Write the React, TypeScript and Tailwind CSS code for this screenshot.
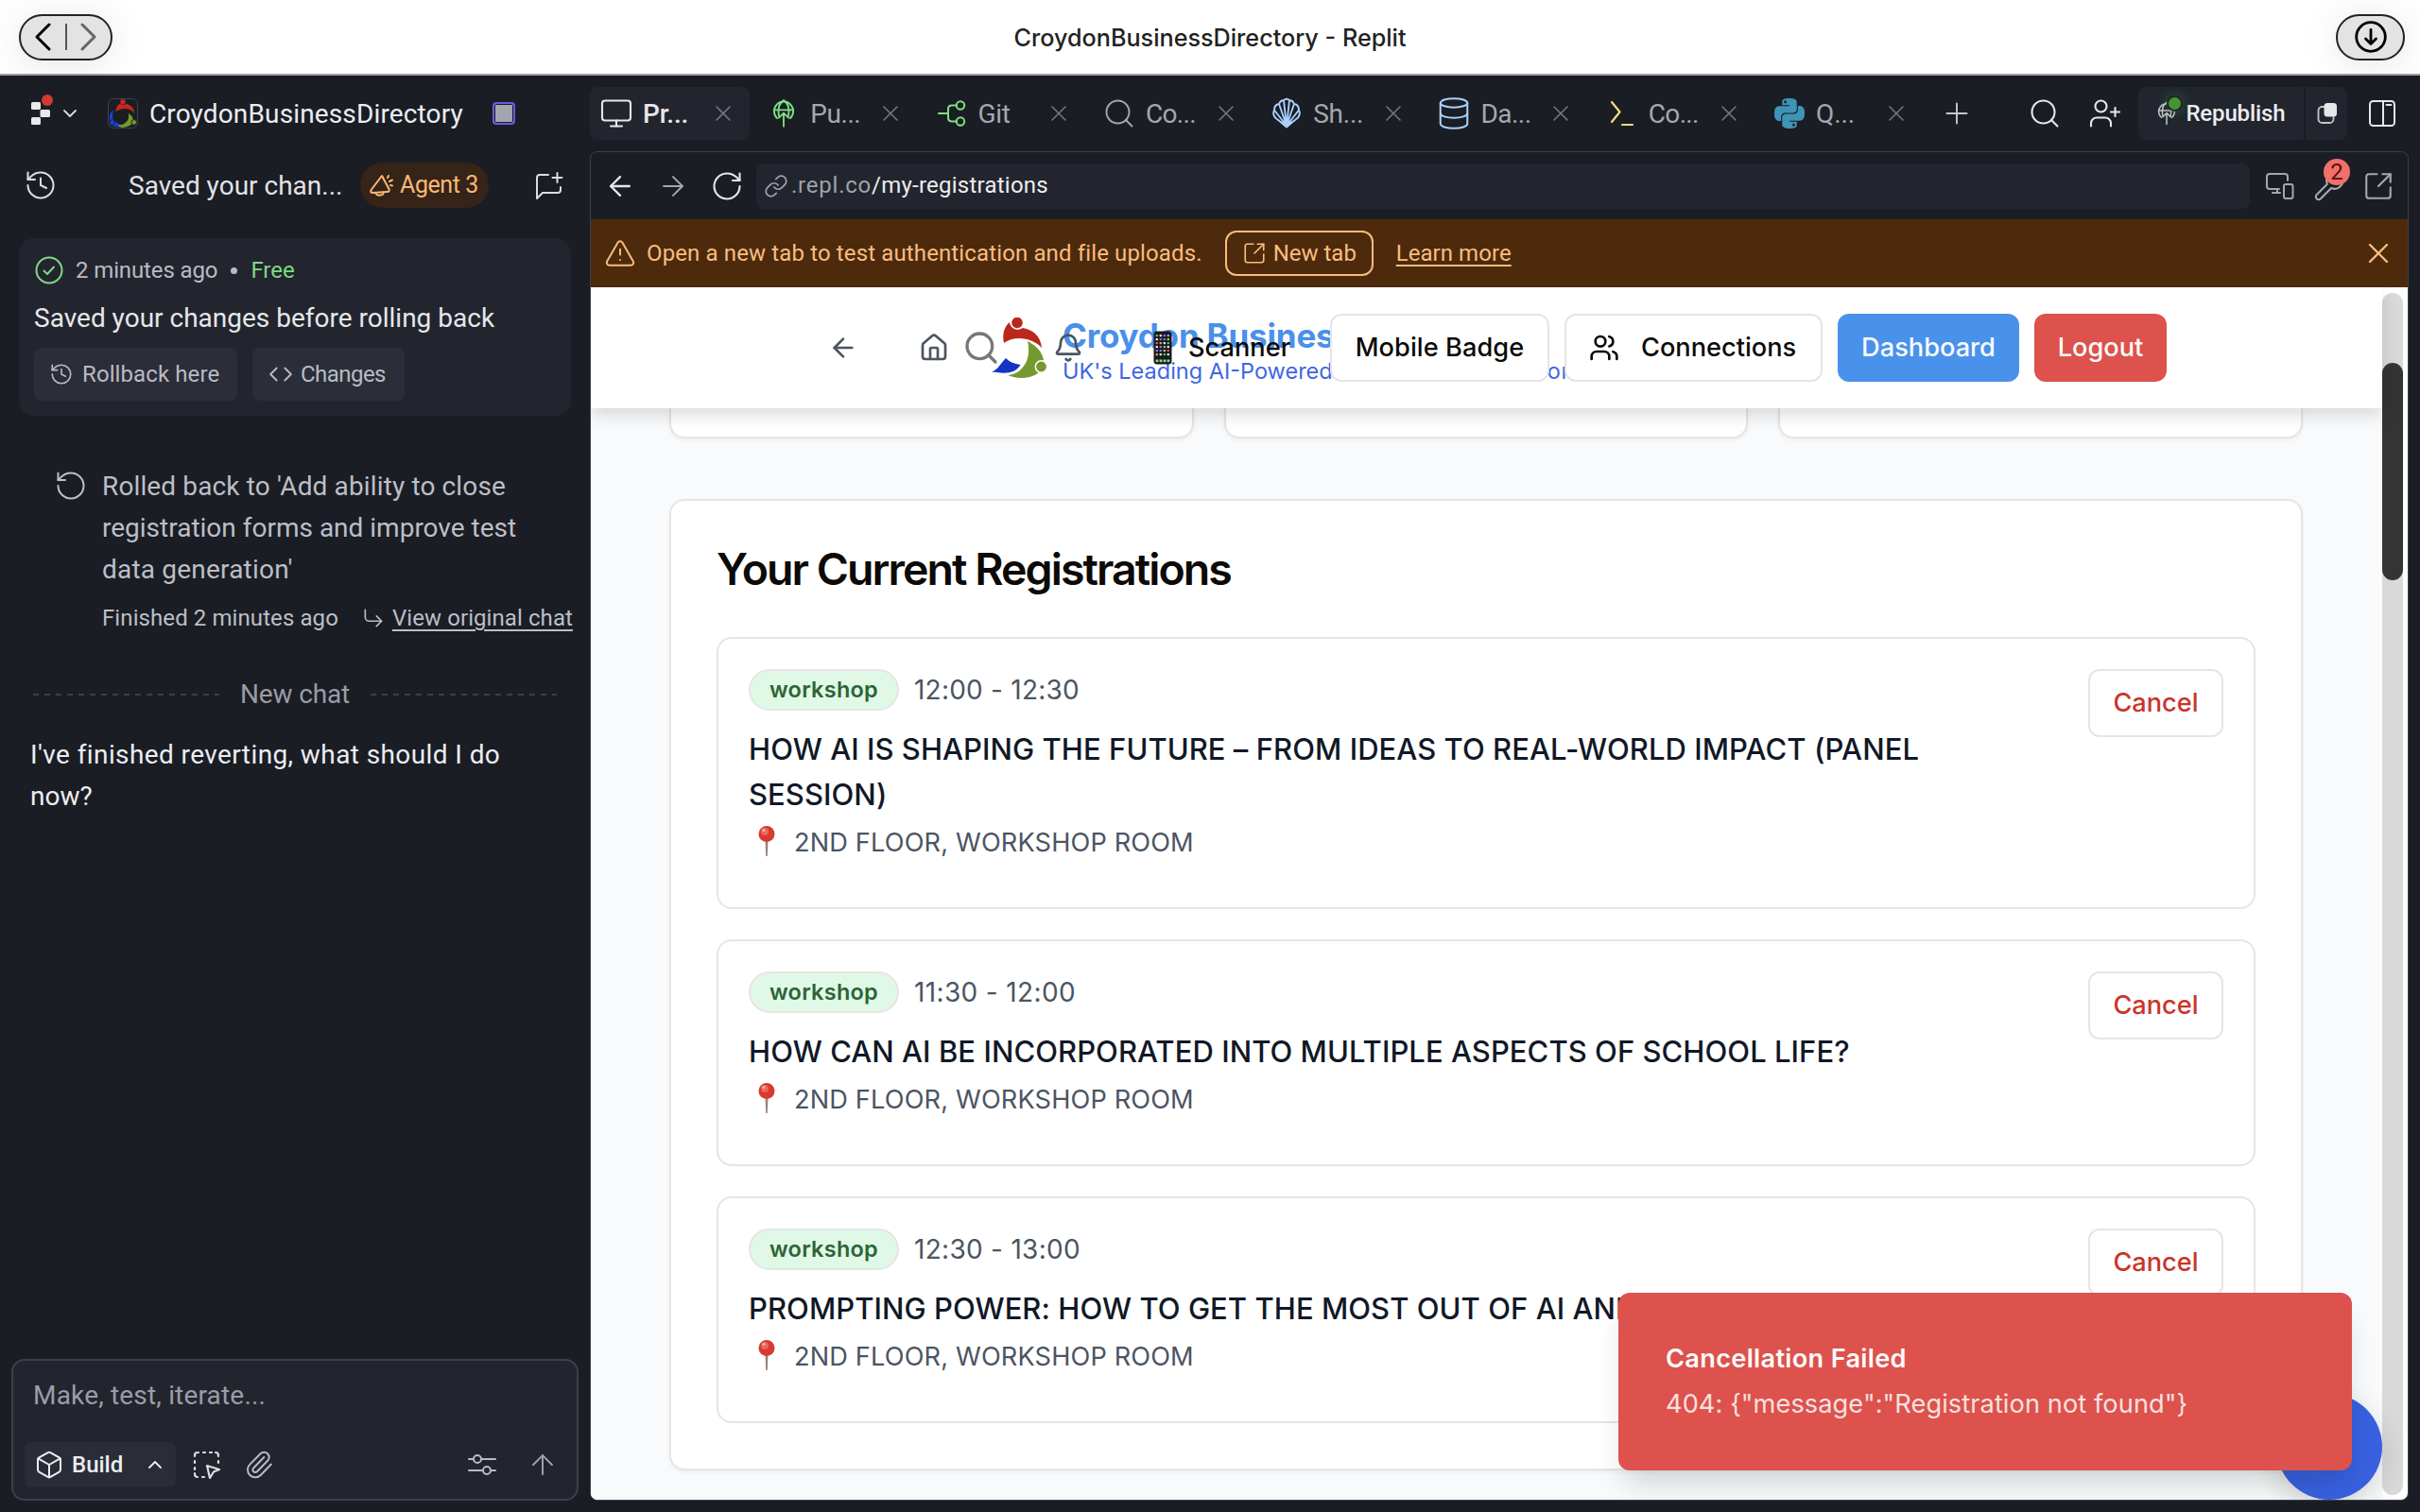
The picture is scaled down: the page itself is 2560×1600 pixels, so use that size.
import React from "react";
import {
  ArrowLeft, ArrowRight, ArrowUp, ChevronDown, ChevronUp, Search, X, Plus, House, Bell, Users,
  History, RotateCcw, RotateCw, SquareArrowOutUpRight, Paperclip, Monitor, Database,
  TriangleAlert, CornerDownRight, Wrench, UserPlus, Box, Code,
} from "lucide-react";
import { SiPython } from "react-icons/si";

function T({ className = "", children }: { className?: string; children: React.ReactNode }) {
  return <span className={"inline-block whitespace-nowrap " + className}>{children}</span>;
}

function Emblem({ className = "" }: { className?: string }) {
  return (
    <svg viewBox="0 0 60 64" className={className} fill="none">
      <path d="M14 27C12 18 14 10 20 5C21 12 28 15 34 11C45 13 53 20 54 32C45 22 26 18 14 27Z" fill="#bb271a" />
      <circle cx="28" cy="5.500" r="5.800" fill="#bb271a" />
      <path d="M39 25C51 31 58 41 56 52C50 64 32 67 18 61C32 60 44 46 39 25Z" fill="#76992f" />
      <circle cx="53.500" cy="52" r="6.200" fill="#76992f" stroke="#fff" strokeWidth="1.500" />
      <path d="M16 43C20 47 25 49 31.500 50C27 58 17 60 7 58L1 57.500C8 55 10 49 16 43Z" fill="#1434c4" />
    </svg>
  );
}

function EmblemFull({ className = "" }: { className?: string }) {
  return (
    <svg viewBox="0 0 32 32" className={className} fill="none">
      <circle cx="16" cy="3" r="3" fill="#c4281c" />
      <path d="M8 14C8 9 10 6 13 5C15 7 18 7 20 5C26 7 29 11 29 16C25 10 15 9 8 14Z" fill="#c4281c" />
      <path d="M6 12C2 19 5 28 18 29C14 31 8 32 1 29V18C2 15 3 14 6 12Z" fill="#1d3fd0" />
      <circle cx="4" cy="26" r="3" fill="#1d3fd0" stroke="#1a1d24" />
      <path d="M22 16C30 20 31 30 16 32C9 31 10 29 14 29C20 27 24 23 22 16Z" fill="#76992f" />
      <circle cx="28.500" cy="26" r="3" fill="#76992f" stroke="#1a1d24" />
    </svg>
  );
}

function GlobeUp({ className = "" }: { className?: string }) {
  return (
    <svg viewBox="0 0 26 34" className={className} fill="none" stroke="currentColor" strokeWidth="2" strokeLinecap="round" strokeLinejoin="round">
      <path d="M5.500 22.500A11 11 0 1 1 20.500 22.500" />
      <path d="M2 13H24M7.500 20C6 11 8 5 13 2C18 5 20 11 18.500 20" />
      <path d="M13 32V17M7.500 22L13 16.500L18.500 22" />
    </svg>
  );
}

function GitIcon({ className = "" }: { className?: string }) {
  return (
    <svg viewBox="0 0 30 28" className={className} fill="none" stroke="currentColor" strokeWidth="2" strokeLinecap="round">
      <circle cx="24" cy="5.500" r="4.200" />
      <circle cx="24" cy="22.500" r="4.200" />
      <path d="M1 14H11M20 5.500H15Q11 5.500 11 9.500V18.500Q11 22.500 15 22.500H20" />
    </svg>
  );
}

function ShellIcon({ className = "" }: { className?: string }) {
  return (
    <svg viewBox="0 0 30 34" className={className} fill="none" stroke="currentColor" strokeWidth="1.900" strokeLinejoin="round">
      <path d="M15 31L3.500 22C1 19.500 .8 16 2 13.500C2 10 4 7.500 7 7C8 4.500 10 3 12 3.300C13.500 1.300 16.500 1.300 18 3.300C20 3 22 4.500 23 7C26 7.500 28 10 28 13.500C29.200 16 29 19.500 26.500 22Z" />
      <path d="M15 30L2 13.500M15 30L7 7M15 30L12 3.300M15 30L18 3.300M15 30L23 7M15 30L28 13.500" />
      <path d="M15 31.500L9.500 26.500H20.500Z" fill="currentColor" />
    </svg>
  );
}

function PromptIcon({ className = "" }: { className?: string }) {
  return (
    <svg viewBox="0 0 26 28" className={className} fill="none" stroke="currentColor" strokeWidth="2.200" strokeLinecap="round" strokeLinejoin="round">
      <path d="M2 2L10.500 12.500L2 23M13 26H24" />
    </svg>
  );
}

function Devices({ className = "" }: { className?: string }) {
  return (
    <svg viewBox="0 0 30 28" className={className} fill="none" stroke="currentColor" strokeWidth="2" strokeLinecap="round">
      <path d="M14 17H4Q1 17 1 14V4Q1 1 4 1H20Q23 1 23 4V8M7 21H15M12 17V21" />
      <rect x="19" y="12" width="9.500" height="15" rx="2" />
    </svg>
  );
}

function Megaphone({ className = "" }: { className?: string }) {
  return (
    <svg viewBox="0 0 26 24" className={className} fill="none" stroke="currentColor" strokeWidth="2" strokeLinecap="round" strokeLinejoin="round">
      <path d="M13 2L20.500 16Q21.500 19 18.500 19L3 20Q0 19.500 2 16.500Z" />
      <path d="M6 20Q8 23.500 11 22.500Q15 22.500 14.500 19.500" />
      <path d="M19 4L20 2M21 8L24 6.500M22 12L24 12.500" />
    </svg>
  );
}

function NewChat({ className = "" }: { className?: string }) {
  return (
    <svg viewBox="0 0 30 30" className={className} fill="none" stroke="currentColor" strokeWidth="2" strokeLinecap="round" strokeLinejoin="round">
      <path d="M14 4H5Q2 4 2 7V29L8 23H24Q27 23 27 20V17M23.500 2V12M18.500 7H28.500" />
    </svg>
  );
}

function SelectCursor({ className = "" }: { className?: string }) {
  return (
    <svg viewBox="0 0 30 30" className={className} fill="none" stroke="currentColor" strokeWidth="2.200" strokeLinecap="round" strokeLinejoin="round">
      <path d="M2 6V5Q2 2 5 2H6M11 2H13M18 2H20M24 2Q27 2 27 5V6M27 11V13M2 11V13M2 18V20M2 24V25Q2 28 5 28M10 28H12" />
      <path d="M15 16L28 20L22 22.500L18 29Z" />
    </svg>
  );
}

function Sliders({ className = "" }: { className?: string }) {
  return (
    <svg viewBox="0 0 30 24" className={className} fill="none" stroke="currentColor" strokeWidth="2" strokeLinecap="round">
      <path d="M1 6H6M14 6H29M1 18H16M24 18H29" />
      <circle cx="10" cy="6" r="4" />
      <circle cx="20" cy="18" r="4" />
    </svg>
  );
}

function Pin() {
  return (
    <svg viewBox="0 0 20 34" className="mt-[-4px] h-[34px] w-[20px]">
      <path d="M8.500 16H11.500L10.800 33H9.200Z" fill="#9b8378" />
      <circle cx="10" cy="9.500" r="8.500" fill="#d63a30" />
      <circle cx="8" cy="7" r="4" fill="#e8695c" />
      <circle cx="7" cy="5.500" r="1.500" fill="#f6b3a8" />
    </svg>
  );
}

const APP_COLORS = ["#5ac463", "#eeeeee", "#c05ae0", "#5ac8f5", "#eeeeee", "#9a6cf0", "#4a90ea", "#e8b64c", "#e25b52", "#f2a33c", "#eeeeee"];

function Phone() {
  const dots = [];
  for (let r = 0; r < 6; r++)
    for (let c = 0; c < 4; c++)
      dots.push(<rect key={`${r}-${c}`} x={2.600 + c * 4} y={4 + r * 4} width="2.400" height="2.200" rx=".6" fill={APP_COLORS[(r * 4 + c) % 11]} />);
  return (
    <svg viewBox="0 0 20 36" className="h-[36px] w-[20px]">
      <rect x=".5" y=".5" width="19" height="35" rx="3.500" fill="#1a1a1c" />
      {dots}
      {[0, 1, 2, 3].map((c) => <rect key={c} x={2.600 + c * 4} y="30.500" width="2.800" height="2.600" fill="#7de0a0" />)}
    </svg>
  );
}

const TABS = [
  { label: "Pr...", cls: "tracking-[-0.24px]", icon: <Monitor size={36} strokeWidth={1.4} className="-mx-[3px] text-[#e6e7ea]" /> },
  { label: "Pu...", cls: "tracking-[-0.45px]", icon: <GlobeUp className="mx-[3px] h-[34px] w-[26px] text-[#7fe082]" /> },
  { label: "Git", cls: "tracking-[-0.35px]", icon: <GitIcon className="h-[28px] w-[30px] text-[#7fe082]" /> },
  { label: "Co...", cls: "tracking-[-0.67px]", icon: <Search size={36} strokeWidth={1.3} className="-mx-[3px] text-[#a5a7b0]" /> },
  { label: "Sh...", cls: "tracking-[-0.24px]", icon: <ShellIcon className="h-[34px] w-[30px] text-[#a9d0fa]" /> },
  { label: "Da...", cls: "tracking-[-0.55px]", icon: <Database size={38} strokeWidth={1.3} className="-mx-[4px] text-[#a9d0fa]" /> },
  { label: "Co...", cls: "tracking-[-0.67px]", icon: <PromptIcon className="mx-[2px] h-[28px] w-[26px] text-[#f0dc7d]" /> },
  { label: "Q...", cls: "tracking-[-0.1px]", icon: <SiPython size={32} className="-mx-px text-[#3f93b5]" /> },
];

const ITEMS = [
  { time: "12:00 - 12:30", cls: "tracking-[0.23px]", lines: ["HOW AI IS SHAPING THE FUTURE – FROM IDEAS TO REAL-WORLD IMPACT (PANEL", "SESSION)"] },
  { time: "11:30 - 12:00", cls: "tracking-[0.36px]", lines: ["HOW CAN AI BE INCORPORATED INTO MULTIPLE ASPECTS OF SCHOOL LIFE?"] },
  { time: "12:30 - 13:00", cls: "tracking-[0.29px]", lines: ["PROMPTING POWER: HOW TO GET THE MOST OUT OF AI AND"] },
];

function TitleBar() {
  return (
    <div className="flex h-[80px] shrink-0 items-center border-b-2 border-[#a0a0a0] bg-white pr-[16px] pl-[20px] font-['Inter',sans-serif]">
      <div className="flex flex-1">
        <div className="flex h-[49px] w-[99px] items-center justify-between rounded-[25px] border-2 border-[#222] bg-[#e3e3e3] px-[14px] shadow-[0_4px_40px_rgba(0,0,0,0.1)]">
          <svg viewBox="0 0 18 34" className="h-[34px] w-[18px]" fill="none" stroke="#000" strokeWidth="3" strokeLinecap="round" strokeLinejoin="round"><path d="M16 4L3 17L16 30" /></svg>
          <div className="h-[28px] w-[2px] bg-[#555]" />
          <svg viewBox="0 0 18 34" className="h-[34px] w-[18px]" fill="none" stroke="#666" strokeWidth="3" strokeLinecap="round" strokeLinejoin="round"><path d="M2 4L15 17L2 30" /></svg>
        </div>
      </div>
      <T className="mt-[3px] mr-[4px] text-[25.2px] font-medium text-[#222]">CroydonBusinessDirectory - Replit</T>
      <div className="flex flex-1 justify-end">
        <div className="flex h-[49px] w-[73px] items-center justify-center rounded-[25px] border-2 border-[#222] bg-[#e3e3e3] shadow-[0_4px_40px_rgba(0,0,0,0.1)]">
          <svg viewBox="0 0 34 34" className="h-[34px] w-[34px]" fill="none" stroke="#000" strokeWidth="2.800" strokeLinecap="round" strokeLinejoin="round">
            <circle cx="17" cy="17" r="15.300" /><path d="M17 9.500V24M11.500 19L17 24.500L22.500 19" />
          </svg>
        </div>
      </div>
    </div>
  );
}

function Sidebar() {
  return (
    <div className="flex w-[624px] shrink-0 flex-col">
      <div className="flex h-[80px] items-center">
        <div className="relative ml-[33px] h-[24px] w-[20px]">
          <svg viewBox="0 0 20 24" className="h-[24px] w-[20px]" fill="#e8e9ec"><rect width="10" height="8" rx="1.500" /><rect x="9.500" y="8" width="10.500" height="8" rx="1.500" /><rect y="16" width="10" height="8" rx="1.500" /></svg>
          <div className="absolute -top-[8px] left-[11px] h-[12px] w-[12px] rounded-full bg-[#d33a31]" />
        </div>
        <ChevronDown size={24} strokeWidth={1.8} className="ml-[9px] text-[#d8d9dd]" />
        <div className="ml-[28px] h-[32px] w-[32px] overflow-hidden rounded-[6px] border border-[#3c404b]"><EmblemFull className="h-[30px] w-[30px]" /></div>
        <T className="mt-[1px] ml-[12px] text-[28px] tracking-[0.14px] text-[#ecedf0]">CroydonBusinessDirectory</T>
        <div className="mr-[79px] ml-auto h-[24px] w-[24px] rounded-[4px] border-[2px] border-[#6a5ae0] bg-[#a3a6b0] shadow-[inset_0_0_0_1px_#1a1d24]" />
      </div>
      <div className="flex h-[72px] items-center">
        <History size={36} strokeWidth={1.35} className="ml-[25px] text-[#dcdde1]" />
        <T className="mt-[2px] ml-[75px] text-[28px] text-[#e2e3e7]">Saved your chan...</T>
        <div className="ml-auto flex h-[48px] w-[136px] items-center rounded-full bg-[#352417] pl-[10px] text-[#fab874]">
          <Megaphone className="h-[26px] w-[26px]" />
          <T className="ml-[6px] text-[25px] tracking-[-0.41px]">Agent 3</T>
        </div>
        <NewChat className="mr-[28px] ml-[49px] h-[30px] w-[30px] text-[#dcdde1]" />
      </div>
      <div className="mx-[20px] mt-[20px] flex h-[188px] flex-col rounded-[16px] bg-[#22252e] px-[16px]">
        <div className="mt-[17px] flex h-[34px] items-center text-[24px] text-[#b9bbc3]">
          <svg viewBox="0 0 32 32" className="h-[32px] w-[32px]" fill="none" stroke="#7fd884" strokeWidth="2" strokeLinecap="round" strokeLinejoin="round"><circle cx="16" cy="16" r="13.500" /><path d="M10.500 16.500L14 20L21 12.500" /></svg>
          <T className="ml-[12px] tracking-[-0.12px]">2 minutes ago</T>
          <div className="ml-[14px] h-[7px] w-[7px] rounded-full bg-[#b9bbc3]" />
          <T className="ml-[14px] text-[#7fd884]">Free</T>
        </div>
        <div className="mt-[12px] flex h-[44px] items-center text-[28px] text-[#e6e7eb]"><T>Saved your changes before rolling back</T></div>
        <div className="mt-[9px] flex gap-[16px] text-[24px] text-[#b9bbc3]">
          <div className="flex h-[56px] w-[215px] items-center rounded-[8px] bg-[#2b2e38] pl-[16px]"><History size={26} strokeWidth={1.5} /><T className="ml-[9px] tracking-[0.1px]">Rollback here</T></div>
          <div className="flex h-[56px] w-[161px] items-center rounded-[8px] bg-[#2b2e38] pl-[17px]"><Code size={26} strokeWidth={1.7} /><T className="ml-[8px] tracking-[-0.54px]">Changes</T></div>
        </div>
      </div>
      <div className="mt-[53px] flex text-[#bcbfc6]">
        <RotateCcw size={36} strokeWidth={1.35} className="mt-[3px] ml-[57px]" />
        <div className="ml-[15px] text-[28px] leading-[44px]">
          <div className="tracking-[0.13px]">Rolled back to 'Add ability to close</div>
          <div>registration forms and improve test</div>
          <div className="tracking-[0.2px]">data generation'</div>
          <div className="mt-[7px] flex items-center text-[24px]">
            <T className="tracking-[0.09px]">Finished 2 minutes ago</T>
            <CornerDownRight size={26} strokeWidth={1.5} className="ml-[24px]" />
            <T className="ml-[7px] tracking-[0.08px] underline decoration-2 underline-offset-[4px]">View original chat</T>
          </div>
        </div>
      </div>
      <div className="mt-[36px] flex h-[46px] items-center justify-between px-[35px] text-[28px] text-[#9a9ca5]">
        <div className="h-[2px] w-[197px] bg-[repeating-linear-gradient(90deg,#3c3f4a_0_6px,transparent_6px_12px)]" />
        <T className="tracking-[-0.16px]">New chat</T>
        <div className="h-[2px] w-[197px] bg-[repeating-linear-gradient(90deg,#3c3f4a_0_6px,transparent_6px_12px)]" />
      </div>
      <div className="mt-[19px] ml-[32px] text-[28px] leading-[44px] text-[#ecedf0]">
        <div className="tracking-[0.4px]">I've finished reverting, what should I do</div>
        <div>now?</div>
      </div>
      <div className="mt-auto mr-[12px] mb-[12px] ml-[12px] flex h-[150px] flex-col rounded-[14px] border-2 border-[#3c4049] bg-[#22252e] px-[12px]">
        <div className="mt-[15px] flex h-[44px] items-center pl-[9px] text-[28px] text-[#9b9da6]"><T className="tracking-[0.18px]">Make, test, iterate...</T></div>
        <div className="mt-[27px] flex h-[48px] items-center text-[#b9bbc3]">
          <div className="flex h-[48px] w-[160px] items-center rounded-[8px] bg-[#2a2d37] pl-[10px] text-[#ecedf0]">
            <Box size={32} strokeWidth={1.5} />
            <T className="ml-[8px] text-[24px] font-medium">Build</T>
            <ChevronUp size={24} strokeWidth={1.800} className="ml-[22px]" />
          </div>
          <SelectCursor className="ml-[18px] h-[30px] w-[30px] text-[#dcdde1]" />
          <Paperclip size={32} strokeWidth={1.5} className="ml-[24px]" />
          <Sliders className="ml-auto h-[24px] w-[30px]" />
          <ArrowUp size={34} strokeWidth={1.4} className="mr-[7px] ml-[32px] text-[#a0a2aa]" />
        </div>
      </div>
    </div>
  );
}

function TabBar() {
  return (
    <div className="flex h-[80px] items-center">
      {TABS.map((t, i) => (
        <div key={i} className={`mr-[8.300px] flex h-[56px] w-[169px] shrink-0 items-center rounded-[8px] pl-[13px] text-[28px] ${i === 0 ? "bg-[#22252e] font-medium text-[#e6e7ea]" : "text-[#a5a7b0]"}`}>
          <div className="flex w-[30px] items-center justify-center">{t.icon}</div>
          <T className={"mt-[1px] ml-[13px] " + t.cls}>{t.label}</T>
          <X size={28} strokeWidth={1.4} className="mr-[14px] ml-auto text-[#74767f]" />
        </div>
      ))}
      <Plus size={36} strokeWidth={1.3} className="ml-[10px] text-[#c4c6cc]" />
      <Search size={36} strokeWidth={1.4} className="ml-[57px] text-[#e6e7ea]" />
      <UserPlus size={36} strokeWidth={1.4} className="ml-[28px] text-[#e6e7ea]" />
      <div className="ml-[17px] flex h-[56px] w-[175px] items-center rounded-l-[8px] bg-[#22252e] pl-[20px]">
        <div className="relative"><GlobeUp className="h-[26px] w-[20px] text-[#c4c6cc]" /><div className="absolute -top-[4px] left-[12px] h-[13px] w-[13px] rounded-full bg-[#45962f] shadow-[0_0_0_2px_#22252e,0_0_12px_4px_#45962f55]" /></div>
        <T className="ml-[10px] text-[24px] font-medium tracking-[-0.14px] text-[#ecedf0]">Republish</T>
      </div>
      <div className="ml-[2px] flex h-[56px] w-[44px] items-center rounded-r-[8px] bg-[#22252e] pl-[12px]">
        <svg viewBox="0 0 22 24" className="h-[24px] w-[22px]" fill="none"><rect x="1.500" y="5" width="16" height="17" rx="4" stroke="#c4c6cc" strokeWidth="1.800" /><rect x="7.500" y="1" width="13.500" height="14.500" rx="3.500" fill="#e6e7ea" /></svg>
      </div>
      <svg viewBox="0 0 28 28" className="ml-[23px] h-[28px] w-[28px]" fill="none" stroke="#e6e7ea" strokeWidth="2" strokeLinecap="round"><rect x="1" y="1" width="26" height="26" rx="3.500" /><path d="M15 1V27M18.500 5H23.500" /></svg>
    </div>
  );
}

function SiteHeader() {
  return (
    <div className="relative z-10 flex h-[128px] w-[1895px] shrink-0 items-center bg-white text-[27.2px] font-medium text-[#0c0a09] shadow-[0_8px_16px_rgba(0,0,0,0.13)]">
      <div className="absolute top-[32px] left-[423px] flex"><Emblem className="h-[64px] w-[60px]" /></div>
      <div className="absolute top-[32px] left-[499px] whitespace-nowrap">
        <div className="text-[35px] leading-[39px] font-bold tracking-[-0.2px] text-[#4a90ea]">Croydon Business Association</div>
        <div className="mt-[2px] text-[23.500px] leading-[32px] font-normal text-[#3f66e3]">UK's Leading AI-Powered<span className="tracking-[0.7px]"> Business Association</span></div>
      </div>
      <ArrowLeft size={32} className="ml-[251px] shrink-0 text-[#4b5563]" />
      <House size={32} className="ml-[64px] shrink-0 text-[#4b5563]" />
      <Search size={40} className="ml-[14px] shrink-0 text-[#777]" />
      <Bell size={32} className="relative ml-[56px] shrink-0 text-[#4b5563]" />
      <div className="relative ml-[74px] flex items-center"><Phone /><T className="ml-[17px]">Scanner</T></div>
      <div className="relative ml-auto flex gap-[16px] pr-[228px]">
        <div className="flex h-[72px] w-[232px] items-center justify-center rounded-[12px] border-2 border-[#e5e5e5] bg-white"><T className="tracking-[0.05px]">Mobile Badge</T></div>
        <div className="flex h-[72px] w-[273px] items-center rounded-[12px] border-2 border-[#e5e5e5] bg-white pl-[24px]"><Users size={32} /><T className="ml-[23px]">Connections</T></div>
        <div className="flex h-[72px] w-[192px] items-center justify-center rounded-[12px] bg-[#4992ec] text-[#f8fafc]"><T>Dashboard</T></div>
        <div className="flex h-[72px] w-[140px] items-center justify-center rounded-[12px] bg-[#dd524c] text-[#fafaf9]"><T>Logout</T></div>
      </div>
    </div>
  );
}

function SitePage() {
  return (
    <div className="relative flex flex-1 overflow-hidden bg-white font-['Inter',sans-serif]">
      <div className="flex w-[1895px] shrink-0 flex-col bg-[#f9fafb]">
        <SiteHeader />
        <div className="mr-px flex h-[32px] w-[1728px] shrink-0 gap-[32px] self-center">
          {[0, 1, 2].map((i) => <div key={i} className="h-full flex-1 rounded-b-[16px] border-2 border-t-0 border-[#e5e5e5] bg-white shadow-[0_2px_4px_rgba(0,0,0,0.05)]" />)}
        </div>
        <div className="mt-[64px] mr-px flex h-[1028px] w-[1728px] shrink-0 flex-col self-center rounded-[16px] border-2 border-[#e5e5e5] bg-white px-[48px] pt-[48px] shadow-[0_2px_4px_rgba(0,0,0,0.05)]">
          <div className="h-[48px] text-[46.500px] leading-[49px] font-semibold tracking-[-1.96px] text-[#0c0a09]">Your Current Registrations</div>
          <div className="mt-[48px] flex flex-col gap-[32px]">
            {ITEMS.map((it, i) => (
              <div key={i} className={`flex items-start rounded-[16px] border-2 border-[#e5e5e5] px-[32px] pt-[32px] ${i === 0 ? "h-[288px]" : "h-[240px]"}`}>
                <div className="flex-1">
                  <div className="flex h-[44px] items-center">
                    <div className="flex h-[44px] w-[159px] items-center justify-center rounded-full border-2 border-[#e5e5e5] bg-[#e0f9e6] text-[23.500px] font-semibold text-[#2e6437]"><T className="tracking-[0.25px]">workshop</T></div>
                    <T className={"ml-[16px] text-[28px] text-[#4b5563] " + it.cls}>{it.time}</T>
                  </div>
                  <div className="mt-[17px] text-[31px] leading-[48px] font-medium tracking-[0.05px] whitespace-nowrap text-[#111827]">
                    {it.lines.map((l) => <div key={l}>{l}</div>)}
                  </div>
                  <div className="mt-[7px] flex h-[40px] items-center pl-[9px] text-[27.200px] text-[#4b5563]"><Pin /><T className="ml-[19px] tracking-[0.13px]">2ND FLOOR, WORKSHOP ROOM</T></div>
                </div>
                <div className="flex h-[72px] w-[143px] items-center justify-center rounded-[12px] border-2 border-[#e5e5e5] text-[27.200px] font-medium text-[#cb342b]"><T>Cancel</T></div>
              </div>
            ))}
          </div>
        </div>
      </div>
      <div className="mt-[6px] mb-[5px] w-[22px] rounded-full bg-[#d9d9d9] pt-[74px]"><div className="h-[230px] w-[22px] rounded-full bg-[#343434]" /></div>
      <div className="absolute right-[27px] bottom-0 h-[112px] w-[112px] rounded-full bg-[#3861e0] shadow-[0_10px_30px_rgba(0,0,0,0.15)]" />
      <div className="absolute right-[59px] bottom-[31px] z-20 flex h-[188px] w-[776px] flex-col justify-center rounded-[12px] bg-[#dd524c] pl-[50px] text-[27.200px] text-[#fafaf9] shadow-[0_20px_30px_-6px_rgba(0,0,0,0.15)]">
        <div className="h-[40px] leading-[40px] font-semibold tracking-[0.3px]">Cancellation Failed</div>
        <div className="mt-[8px] h-[40px] leading-[40px] tracking-[0.08px] opacity-85">{'404: {"message":"Registration not found"}'}</div>
      </div>
    </div>
  );
}

function Preview() {
  return (
    <div className="flex w-[1924px] flex-1 flex-col overflow-hidden rounded-[8px] border border-[#3c404b]">
      <div className="flex h-[71px] shrink-0 items-center text-[#a5a7b0]">
        <ArrowLeft size={34} strokeWidth={1.600} className="ml-[14px] text-[#e6e7ea]" />
        <ArrowRight size={34} strokeWidth={1.400} className="ml-[22px]" />
        <RotateCw size={36} strokeWidth={1.400} className="ml-[22px] text-[#e6e7ea]" />
        <div className="ml-[13px] flex h-[48px] w-[1580px] items-center rounded-[8px] bg-[#22252e] pl-[8px] text-[24px] text-[#a0a2ab]">
          <svg viewBox="0 0 24 24" className="h-[26px] w-[26px]" fill="none" stroke="currentColor" strokeWidth="1.600" strokeLinecap="round"><path d="M10 13a5 5 0 0 0 7.540.54l3-3a5 5 0 0 0-7.070-7.070l-1.720 1.710M14 11a5 5 0 0 0-7.540-.54l-3 3a5 5 0 0 0 7.070 7.070l1.710-1.710" /></svg>
          <T className="mb-[2px] ml-[3px] tracking-[0.77px]">.repl.co</T><T className="mb-[2px] tracking-[0.24px] text-[#ecedf0]">/my-registrations</T>
        </div>
        <Devices className="ml-[17px] h-[28px] w-[30px]" />
        <div className="relative ml-[20px]">
          <Wrench size={34} strokeWidth={1.500} />
          <div className="absolute -top-[12px] right-[-5px] flex h-[28px] w-[28px] items-center justify-center rounded-full bg-[#f1706b] text-[24px] leading-none text-[#5a100c]">2</div>
        </div>
        <SquareArrowOutUpRight size={34} strokeWidth={1.500} className="ml-[18px]" />
      </div>
      <div className="flex h-[72px] shrink-0 items-center bg-[#4d2a0c] text-[24px] text-[#f9bd7f]">
        <TriangleAlert size={34} strokeWidth={1.400} className="ml-[14px]" />
        <T className="ml-[11px] tracking-[0.13px]">Open a new tab to test authentication and file uploads.</T>
        <div className="ml-[24px] flex h-[48px] w-[157px] items-center rounded-[12px] border-2 border-[#f9bd7f] pl-[16px]"><SquareArrowOutUpRight size={26} strokeWidth={1.500} /><T className="ml-[7px]">New tab</T></div>
        <T className="ml-[24px] tracking-[0.06px] underline decoration-2 underline-offset-[4px]">Learn more</T>
        <X size={36} strokeWidth={1.600} className="mr-[13px] ml-auto" />
      </div>
      <SitePage />
    </div>
  );
}

export default function App() {
  return (
    <div className="flex h-[1600px] w-[2560px] flex-col overflow-hidden bg-[#1a1d24] font-['Roboto',sans-serif]">
      <TitleBar />
      <div className="flex flex-1">
        <Sidebar />
        <div className="flex flex-1 flex-col pb-[12px]"><TabBar /><Preview /></div>
      </div>
    </div>
  );
}
